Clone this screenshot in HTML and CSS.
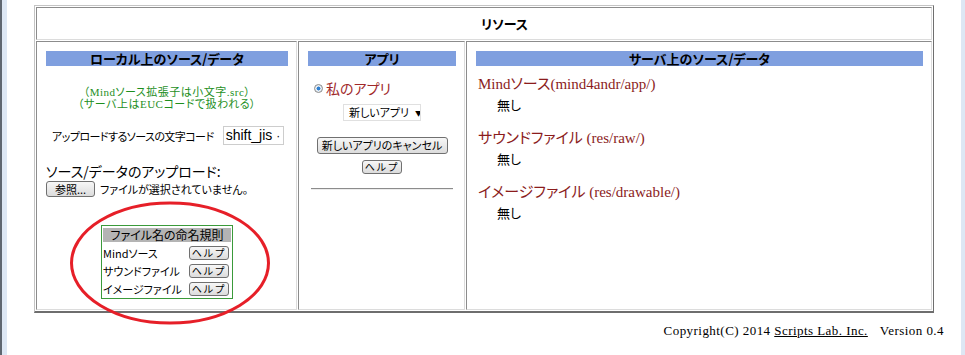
FILE: index.html
```html
<!DOCTYPE html>
<html lang="ja">
<head>
    <meta charset="UTF-8">
    <title>リソース</title>
    <link rel="stylesheet" href="styles.css">
</head>
<body>
<div class="frame">
    <div class="page">
        <div class="res-table">
            <div class="cell title-cell">リソース</div>

            <div class="cell local-cell">
                <div class="bar">ローカル上のソース/データ</div>
                <p class="note">（Mindソース拡張子は小文字.src）<br>（サーバ上はEUCコードで扱われる）</p>
                <div class="code-row">
                    <span class="code-label">アップロードするソースの文字コード</span>
                    <span class="select code-select">shift_jis <small>·</small></span>
                </div>
                <p class="upload-label">ソース/データのアップロード:</p>
                <div class="file-row">
                    <span class="btn browse">参照...</span>
                    <span class="file-none">ファイルが選択されていません。</span>
                </div>
                <div class="rules">
                    <div class="rules-head">ファイル名の命名規則</div>
                    <div class="rule"><span>Mindソース</span><span class="btn help">ヘルプ</span></div>
                    <div class="rule"><span>サウンドファイル</span><span class="btn help">ヘルプ</span></div>
                    <div class="rule"><span>イメージファイル</span><span class="btn help">ヘルプ</span></div>
                </div>
                <!-- hand drawn red circle round the naming rules -->
                <svg class="ring" width="202" height="124" viewBox="0 0 202 124">
                    <ellipse cx="101" cy="62" rx="98.5" ry="60" fill="none" stroke="#e61f28" stroke-width="3"/>
                </svg>
            </div>

            <div class="cell app-cell">
                <div class="bar">アプリ</div>
                <div class="radio-row"><span class="radio"></span><span class="my-app">私のアプリ</span></div>
                <span class="select app-select">新しいアプリ<span class="arrow">▼</span></span>
                <span class="btn cancel">新しいアプリのキャンセル</span>
                <span class="btn help">ヘルプ</span>
                <hr class="sep">
            </div>

            <div class="cell server-cell">
                <div class="bar">サーバ上のソース/データ</div>
                <p class="srv-title first">Mindソース(mind4andr/app/)</p>
                <p class="none">無し</p>
                <p class="srv-title">サウンドファイル (res/raw/)</p>
                <p class="none">無し</p>
                <p class="srv-title">イメージファイル (res/drawable/)</p>
                <p class="none">無し</p>
            </div>
        </div>

        <p class="footer">Copyright(C) 2014 <a href="#">Scripts Lab. Inc.</a><span class="version">Version 0.4</span></p>
    </div>
</div>
</body>
</html>
```

FILE: styles.css
```css
body {
    margin: 0;
    border-left: 2px solid #5f6670;
    font-family: "Noto Sans CJK JP", "Liberation Sans", sans-serif;
    font-size: 12px;
    color: #000;
    background: #fff;
    font-feature-settings: "palt";
}
.frame { border-left: 5px solid #dde7f4; border-right: 4px solid #dde7f4; height: 355px; box-sizing: border-box; }
.page { padding: 5px 0 0 27px; }

/* outer table */
.res-table {
    width: 900px;
    box-sizing: border-box;
    display: grid;
    grid-template-columns: 261px 167px 466px;
    grid-template-rows: 33px 269px;
    gap: 1px;
    padding: 1px;
    border: 1px solid;
    border-color: #c4c4c4 #6e6e6e #6e6e6e #c4c4c4;
    border-bottom-width: 2px;
}
.cell {
    box-sizing: border-box;
    border: 1px solid;
    border-color: #8c8c8c #dcdcdc #dcdcdc #8c8c8c;
    padding: 9px 8px 0 9px;
}
.title-cell {
    grid-column: 1 / 4;
    padding: 0 0 0 41px;
    display: flex; align-items: center; justify-content: center;
    font-weight: bold; font-size: 13px;
}
.bar {
    height: 15px; line-height: 15px;
    background: #7f9fdf;
    text-align: center; font-weight: bold; font-size: 13px;
}
p { margin: 0; }

/* local side */
.local-cell { position: relative; }
.note {
    margin-top: 20px;
    text-align: center; color: #1e8f1e;
    font-family: "Liberation Serif", "Noto Sans CJK JP", serif;
    font-size: 11px; line-height: 12px; letter-spacing: 0.5px;
}
.code-row { margin-top: 16px; height: 19px; display: flex; align-items: center; gap: 9px; padding-left: 6px; white-space: nowrap; }
.code-label { font-size: 11px; letter-spacing: -0.55px; }
.select { display: inline-block; box-sizing: border-box; border: 1px solid #cdcdcd; background: #fff; white-space: nowrap; overflow: hidden; flex-shrink: 0; }
.code-select { width: 61px; height: 19px; padding-left: 2px; font-family: "Liberation Sans", sans-serif; font-size: 14px; line-height: 17px; }
.code-select small { font-size: 12px; }
.upload-label { margin-top: 18px; font-size: 14px; line-height: 16px; }
.file-row { margin-top: 2px; display: flex; align-items: center; gap: 5px; }
.file-none { font-size: 11px; }

.btn {
    display: inline-block; box-sizing: border-box;
    border: 1px solid #707070; border-radius: 3px;
    background: linear-gradient(#f7f7f7, #dcdcdc);
    text-align: center; white-space: nowrap; overflow: hidden;
}
.browse { width: 49px; height: 16px; font-size: 11px; line-height: 14px; }
.help { width: 40px; height: 14px; font-size: 10px; line-height: 12px; letter-spacing: 2px; }

.rules { width: 132px; margin: 28px auto 0; box-sizing: border-box; border: 1px solid #3a9a3a; padding: 2px 1px 0; font-size: 11px; }
.rules-head { height: 14px; line-height: 14px; background: #b4b4b4; text-align: center; margin-bottom: 2px; font-size: 12px; }
.rule { height: 18px; display: flex; align-items: center; justify-content: space-between; padding-right: 2px; }

.ring { position: absolute; left: 32px; top: 159px; overflow: visible; pointer-events: none; }

/* app column */
.app-cell { display: flex; flex-direction: column; align-items: center; }
.app-cell .bar { align-self: stretch; }
.radio-row { align-self: stretch; margin-top: 14px; padding-left: 6px; height: 16px; display: flex; align-items: center; gap: 3px; }
.radio {
    width: 9px; height: 9px; border-radius: 50%; box-sizing: border-box;
    border: 1px solid #8a8a8a;
    background: radial-gradient(circle, #2e7fd1 0 35%, #e6edf3 45%);
}
.my-app { color: #a0282a; font-size: 14px; }
.app-select { margin-top: 8px; width: 78px; height: 17px; font-size: 11px; line-height: 15px; padding-left: 5px; border-color: #e0e0e0; text-align: left; }
.arrow { font-size: 7px; margin-left: 6px; vertical-align: 1px; }
.cancel { margin-top: 16px; width: 131px; height: 17px; font-size: 11px; line-height: 15px; }
.app-cell .help { margin-top: 6px; }
.sep { width: 142px; margin: 14px 0 0; border: 0; border-top: 1px solid #8c8c8c; border-bottom: 1px solid #ececec; }

/* server column */
.srv-title {
    margin: 15px 0 0 2px;
    color: #8b1c1c;
    font-family: "Liberation Serif", "Noto Sans CJK JP", serif;
    font-size: 15px; line-height: 18px;
}
.srv-title.first { margin-top: 9px; }
.none { margin: 3px 0 0 21px; font-size: 13px; line-height: 18px; }

.footer {
    margin-top: 10px; padding-right: 17px;
    text-align: right;
    font-family: "Liberation Serif", serif; font-size: 13px; line-height: 16px; letter-spacing: 0.45px;
}
.footer a { color: #000; }
.version { margin-left: 12px; }
```
